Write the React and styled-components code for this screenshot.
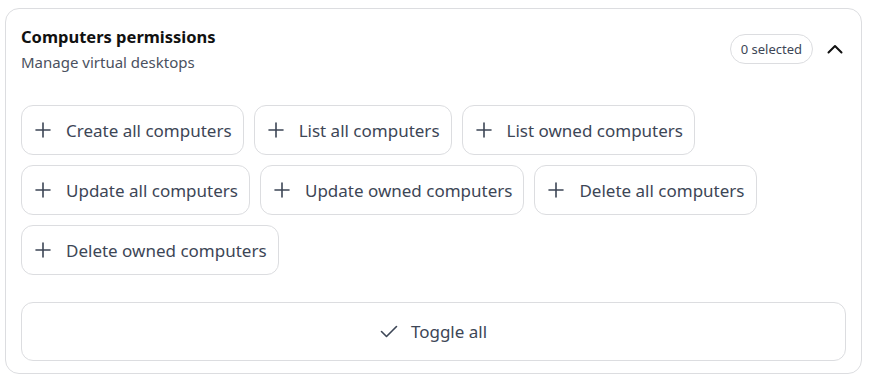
import React from 'react';
import styled, { createGlobalStyle } from 'styled-components';

const GlobalStyle = createGlobalStyle`
  body {
    margin: 0;
    padding: 8px 11px 0 5px;
    background: #ffffff;
    font-family: "Noto Sans", Lato, sans-serif;
  }
`;

const permissions = [
  'Create all computers',
  'List all computers',
  'List owned computers',
  'Update all computers',
  'Update owned computers',
  'Delete all computers',
  'Delete owned computers',
];

const Card = styled.section`
  width: 857px;
  height: 366px;
  box-sizing: border-box;
  border: 1px solid #dcdde0;
  border-radius: 14px;
  padding: 17px 15px 12px 15px;
  display: flex;
  flex-direction: column;
`;

const Header = styled.header`
  display: flex;
  justify-content: space-between;
  align-items: center;
`;

const Titles = styled.div`
  display: flex;
  flex-direction: column;
  gap: 4px;
`;

const Title = styled.h2`
  margin: 0;
  font-size: 16.5px;
  font-weight: 700;
  color: #111111;
  line-height: 22px;
`;

const Subtitle = styled.p`
  margin: 0;
  font-size: 15px;
  color: #4a5160;
  line-height: 20px;
`;

const Actions = styled.div`
  display: flex;
  align-items: center;
  gap: 14px;
  margin-right: 3px;
`;

const Badge = styled.span`
  display: inline-flex;
  align-items: center;
  height: 30px;
  box-sizing: border-box;
  padding: 0 10px;
  border: 1px solid #dcdde0;
  border-radius: 999px;
  font-size: 13px;
  color: #3d4656;
`;

const IconButton = styled.button`
  border: none;
  background: none;
  padding: 0;
  display: flex;
  color: #111111;
  cursor: pointer;
`;

const Chips = styled.div`
  display: flex;
  flex-wrap: wrap;
  gap: 10px;
  margin-top: 33px;
`;

const Chip = styled.button`
  display: inline-flex;
  align-items: center;
  gap: 15px;
  height: 50px;
  box-sizing: border-box;
  padding: 0 11px 0 13px;
  border: 1px solid #dcdde0;
  border-radius: 12px;
  background: #ffffff;
  font-family: inherit;
  font-size: 17px;
  color: #3d4656;
  cursor: pointer;
`;

const ToggleAll = styled.button`
  margin-top: auto;
  height: 59px;
  width: 100%;
  display: flex;
  align-items: center;
  justify-content: center;
  gap: 13px;
  border: 1px solid #dcdde0;
  border-radius: 12px;
  background: #ffffff;
  font-family: inherit;
  font-size: 17px;
  color: #3d4656;
  cursor: pointer;
`;

const Plus = () => (
  <svg width="16" height="16" viewBox="0 0 16 16" fill="none" stroke="#3d4656" strokeWidth="1.6" strokeLinecap="round">
    <path d="M8 1v14M1 8h14" />
  </svg>
);

const Check = () => (
  <svg width="18" height="13" viewBox="0 0 18 13" fill="none" stroke="#3d4656" strokeWidth="1.6" strokeLinecap="round" strokeLinejoin="round">
    <path d="M1.5 6.5l5 5L16.5 1.5" />
  </svg>
);

const ChevronUp = () => (
  <svg width="16" height="10" viewBox="0 0 16 10" fill="none" stroke="#111111" strokeWidth="2" strokeLinecap="round" strokeLinejoin="round">
    <path d="M1.5 8.5L8 2l6.5 6.5" />
  </svg>
);

export default function App() {
  return (
    <>
      <GlobalStyle />
      <Card>
        <Header>
          <Titles>
            <Title>Computers permissions</Title>
            <Subtitle>Manage virtual desktops</Subtitle>
          </Titles>
          <Actions>
            <Badge>0 selected</Badge>
            <IconButton aria-label="Collapse">
              <ChevronUp />
            </IconButton>
          </Actions>
        </Header>
        <Chips>
          {permissions.map((p) => (
            <Chip key={p}>
              <Plus />
              {p}
            </Chip>
          ))}
        </Chips>
        <ToggleAll>
          <Check />
          Toggle all
        </ToggleAll>
      </Card>
    </>
  );
}
